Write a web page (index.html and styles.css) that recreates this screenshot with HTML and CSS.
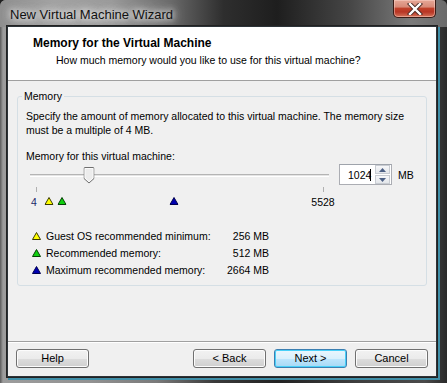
FILE: index.html
```html
<!DOCTYPE html>
<html>
<head>
<meta charset="utf-8">
<link rel="stylesheet" href="styles.css">
</head>
<body>
<div class="window">
  <div class="titlebar">
    <span class="title">New Virtual Machine Wizard</span>
    <div class="close">
      <svg width="16" height="12" viewBox="0 0 16 12"><path d="M3 1 L13 11 M13 1 L3 11" stroke="#4a2a24" stroke-width="4.2" stroke-linecap="square"/><path d="M3 1 L13 11 M13 1 L3 11" stroke="#ffffff" stroke-width="2.4" stroke-linecap="square"/></svg>
    </div>
  </div>
  <div class="client">
    <div class="header">
      <div class="h-title">Memory for the Virtual Machine</div>
      <div class="h-sub">How much memory would you like to use for this virtual machine?</div>
    </div>
    <div class="content">
      <fieldset class="group">
        <legend>Memory</legend>
        <p class="desc">Specify the amount of memory allocated to this virtual machine. The memory size must be a multiple of 4 MB.</p>
        <div class="label">Memory for this virtual machine:</div>
        <div class="slider-row">
          <div class="slider">
            <div class="scale">
              <div class="track"></div>
              <svg class="thumb" style="left:18.47%" width="11" height="17" viewBox="0 0 11 17"><path d="M1.5 0.5 H9.5 Q10.5 0.5 10.5 1.5 V11.5 L5.5 16 L0.5 11.5 V1.5 Q0.5 0.5 1.5 0.5 Z" fill="#ececec" stroke="#6f6f6f"/><path d="M1.5 1.5 H9.5 V11 L5.5 14.7 L1.5 11 Z" fill="none" stroke="#ffffff" stroke-width="0.8"/></svg>
            </div>
          </div>
          <div class="spin">
            <span class="spin-val">1024<span class="caret"></span></span>
            <div class="spin-btns">
              <div class="sb"><svg width="7" height="4" viewBox="0 0 7 4"><path d="M0 4 L3.5 0 L7 4 Z" fill="#4d6185"/></svg></div>
              <div class="sb"><svg width="7" height="4" viewBox="0 0 7 4"><path d="M0 0 L3.5 4 L7 0 Z" fill="#4d6185"/></svg></div>
            </div>
          </div>
          <span class="unit">MB</span>
        </div>
        <div class="marks">
          <div class="scale2">
            <span class="tick" style="left:0%"></span>
            <span class="tick" style="left:100%"></span>
            <span class="num num-min">4</span>
            <span class="num num-max">5528</span>
            <svg class="tri" style="left:4.56%" width="9" height="8" viewBox="0 0 9 8"><path d="M4.5 0.5 L8.5 7.5 H0.5 Z" fill="#ffff00" stroke="#3a3a00"/></svg>
            <svg class="tri" style="left:9.2%" width="9" height="8" viewBox="0 0 9 8"><path d="M4.5 0.5 L8.5 7.5 H0.5 Z" fill="#10d010" stroke="#064006"/></svg>
            <svg class="tri" style="left:48.15%" width="9" height="8" viewBox="0 0 9 8"><path d="M4.5 0.5 L8.5 7.5 H0.5 Z" fill="#0000b0" stroke="#000050"/></svg>
          </div>
        </div>
        <div class="legend-grid">
          <svg width="9" height="8" viewBox="0 0 9 8"><path d="M4.5 0.5 L8.5 7.5 H0.5 Z" fill="#ffff00" stroke="#3a3a00"/></svg>
          <span>Guest OS recommended minimum:</span>
          <span class="val">256 MB</span>
          <svg width="9" height="8" viewBox="0 0 9 8"><path d="M4.5 0.5 L8.5 7.5 H0.5 Z" fill="#10d010" stroke="#064006"/></svg>
          <span>Recommended memory:</span>
          <span class="val">512 MB</span>
          <svg width="9" height="8" viewBox="0 0 9 8"><path d="M4.5 0.5 L8.5 7.5 H0.5 Z" fill="#0000b0" stroke="#000050"/></svg>
          <span>Maximum recommended memory:</span>
          <span class="val">2664 MB</span>
        </div>
      </fieldset>
    </div>
    <div class="footer">
      <button class="btn">Help</button>
      <div class="spacer"></div>
      <button class="btn">&lt; Back</button>
      <button class="btn btn-default">Next &gt;</button>
      <button class="btn">Cancel</button>
    </div>
  </div>
</div>
</body>
</html>
```

FILE: styles.css
```css
* { box-sizing: border-box; }
html, body { margin: 0; padding: 0; }
body {
  width: 447px;
  height: 383px;
  overflow: hidden;
  font-family: "Liberation Sans", Arial, sans-serif;
  font-size: 10.5px;
  color: #000;
  background: #202020;
}
.window {
  width: 447px;
  height: 383px;
  display: flex;
  flex-direction: column;
  background: linear-gradient(90deg, #5a5a5a 0px, #9c9c9c 3px, #929292 20%, #7a7a7a 35%, #3a3a3a 48%, #222 62%, #3e3e3e 80%, #4a4a4a 95%, #2a2a2a 100%);
  border-radius: 6px 6px 0 0;
}
.titlebar {
  height: 27px;
  display: flex;
  align-items: flex-start;
  background: linear-gradient(90deg, #8e8e8e 0%, #a2a2a2 12%, #9a9a9a 25%, #6a6a6a 38%, #2e2e2e 50%, #1e1e1e 62%, #454545 78%, #7a7a7a 92%, #6a6a6a 100%);
  border-radius: 6px 6px 0 0;
  flex: none;
}
.title {
  font-family: "Liberation Sans", Arial, sans-serif;
  font-size: 13px;
  padding: 7px 0 0 10px;
  color: #111;
  text-shadow: 0 0 6px #fff, 0 0 10px #ddd, 0 0 14px #ccc;
}
.close {
  margin-left: auto;
  margin-right: 11px;
  width: 43px;
  height: 18px;
  border: 1px solid #3a1c16;
  border-top: none;
  border-radius: 0 0 5px 5px;
  background: linear-gradient(180deg, #e6a897 0%, #d88a78 40%, #c0412a 50%, #b83524 70%, #d4735a 100%);
  box-shadow: inset 0 0 0 1px rgba(255,220,210,0.45);
  display: flex;
  align-items: center;
  justify-content: center;
}
.client {
  margin: 0 11px 0 8px;
  height: 349px;
  background: #f0f0f0;
  display: flex;
  flex-direction: column;
  outline: 1px solid #2c3338;
  box-shadow: 0 0 0 2px #222, 2px 2px 0 2px #3f8fa8;
}
.header {
  height: 54px;
  background: #fff;
  border-bottom: 1px solid #a0a0a0;
  flex: none;
}
.h-title {
  font-weight: bold;
  font-size: 12px;
  padding: 9px 0 0 25px;
  line-height: 14px;
}
.h-sub {
  padding: 3px 0 0 48px;
  line-height: 14px;
}
.content {
  flex: 1;
  padding: 8px 9px 0 9px;
}
.group {
  margin: 0;
  padding: 0 8px 0 8px;
  height: 197px;
  border: 1px solid #d5dfe5;
  border-radius: 3px;
  min-width: 0;
}
.group legend {
  padding: 0 2px;
  margin-left: -4px;
  line-height: 14px;
}
.desc {
  margin: 6px 0 0 0;
  line-height: 14px;
}
.label {
  margin-top: 12px;
  line-height: 14px;
}
.slider-row {
  display: flex;
  align-items: center;
  margin-top: 1px;
  height: 21px;
}
.slider {
  width: 299px;
  height: 21px;
  margin-left: 4px;
  padding: 0 6px;
}
.scale {
  position: relative;
  height: 21px;
}
.track {
  position: absolute;
  left: -6px;
  right: -6px;
  top: 10px;
  height: 3px;
  border-top: 1px solid #b4b4b4;
  border-bottom: 1px solid #fff;
  background: #e4e4e4;
}
.thumb {
  position: absolute;
  top: 3px;
  transform: translateX(-50%);
}
.spin {
  margin-left: 10px;
  width: 53px;
  height: 21px;
  background: #fff;
  border: 1px solid #abadb3;
  border-top-color: #9ea3ab;
  display: flex;
  align-items: center;
}
.spin-val {
  flex: 1;
  padding-left: 8px;
  position: relative;
}
.caret {
  display: inline-block;
  width: 1px;
  height: 12px;
  background: #000;
  vertical-align: -2px;
  margin-left: -1px;
}
.spin-btns {
  width: 15px;
  height: 19px;
  display: flex;
  flex-direction: column;
  gap: 1px;
  margin-right: 1px;
}
.sb {
  flex: 1;
  border: 1px solid #c8ccd2;
  background: linear-gradient(180deg, #f6f7f9, #e3e6ea);
  display: flex;
  align-items: center;
  justify-content: center;
}
.unit {
  margin-left: 6px;
}
.marks {
  height: 22px;
  margin-left: 4px;
  width: 299px;
  padding: 0 6px;
}
.scale2 {
  position: relative;
  height: 22px;
}
.tick {
  position: absolute;
  top: 2px;
  width: 1px;
  height: 5px;
  background: #b0b0b0;
}
.num {
  position: absolute;
  top: 11px;
  line-height: 13px;
}
.num-min { left: -5px; color: #1a2a6a; }
.num-max { left: 100%; transform: translateX(-50%); }
.tri {
  position: absolute;
  top: 12px;
  transform: translateX(-50%);
}
.legend-grid {
  margin: 22px 0 0 6px;
  display: grid;
  grid-template-columns: 9px 179px 42px;
  column-gap: 5px;
  row-gap: 3px;
  align-items: center;
  line-height: 14px;
  width: max-content;
}
.legend-grid .val { text-align: right; margin-left: -5px; margin-right: 3px; }
.footer {
  flex: none;
  height: 35px;
  border-top: 1px solid #a0a0a0;
  box-shadow: inset 0 1px 0 #fff;
  display: flex;
  align-items: flex-start;
  gap: 8px;
  padding: 7px 8px 0 8px;
}
.spacer { flex: 1; }
.btn {
  width: 73px;
  height: 19px;
  font-family: "Liberation Sans", Arial, sans-serif;
  font-size: 11px;
  color: #000;
  border: 1px solid #707070;
  border-radius: 3px;
  background: linear-gradient(180deg, #f2f2f2 0%, #ebebeb 50%, #dddddd 51%, #cfcfcf 100%);
  box-shadow: inset 0 0 0 1px #fcfcfc;
  padding: 0;
  line-height: 17px;
}
.btn-default {
  border-color: #3c7fb1;
  background: linear-gradient(180deg, #eaf6fd 0%, #d9f0fc 50%, #bee6fd 51%, #a7d9f5 100%);
  box-shadow: inset 0 0 0 1px #48d0f8;
}
```
